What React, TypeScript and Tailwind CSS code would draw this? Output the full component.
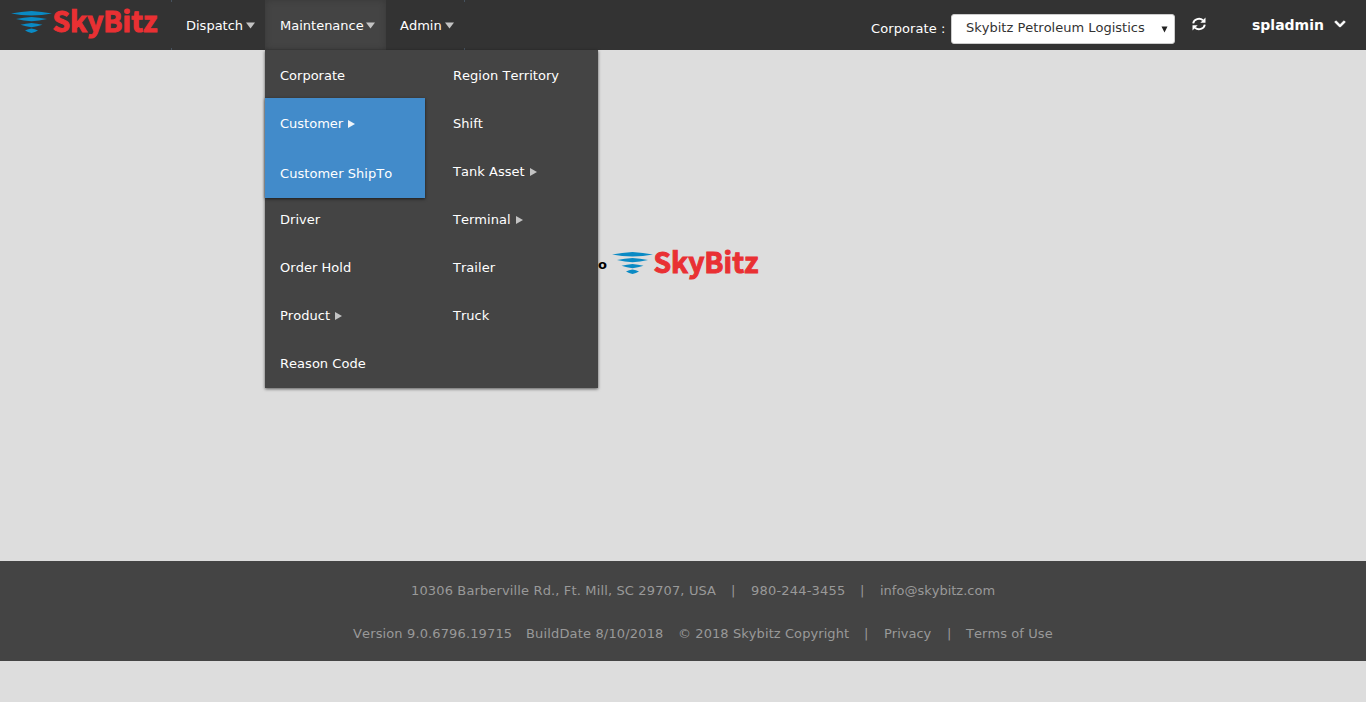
import type { ReactNode } from "react";
import { FaChevronDown } from "react-icons/fa";

function Logo() {
  return (
    <svg width="150" height="36" viewBox="0 0 150 36" className="block shrink-0 overflow-visible">
      <g fill="#0a8ac4">
        <path d="M0 5.500 Q10 3.600 20.500 3 Q31 3.600 41 5.500 Q31 7.300 20.500 7.500 Q10 7.300 0 5.500Z" />
        <path d="M5 11 Q13 9.400 20.500 9 Q28 9.400 36 11 Q28 12.900 20.500 13.300 Q13 12.900 5 11Z" />
        <path d="M9.500 16.800 Q15 15.500 20.500 15 Q26 15.500 31.500 16.800 Q26 18.700 20.500 19.200 Q15 18.700 9.500 16.800Z" />
        <path d="M14 22.500 Q17 20.900 20.500 20.400 Q24 20.900 27 22.500 Q24 24.400 20.500 25 Q17 24.400 14 22.500Z" />
      </g>
      <text
        x="41.500"
        y="24.400"
        textLength="105"
        lengthAdjust="spacingAndGlyphs"
        fill="#e93033"
        stroke="#e93033"
        strokeWidth="1"
        className="font-['Noto_Sans_CJK_SC',sans-serif] text-[28px] font-bold"
      >
        SkyBitz
      </text>
    </svg>
  );
}

function Down() {
  return (
    <svg width="9" height="7" viewBox="0 0 9 7" className="ml-[3px] shrink-0">
      <path d="M0 0.500H9L4.500 6.500Z" fill="#c3c3c3" />
    </svg>
  );
}

function Right({ light = false }: { light?: boolean }) {
  return (
    <svg width="7" height="8" viewBox="0 0 7 8" className="ml-[5px] shrink-0">
      <path d="M0 0L7 4L0 8Z" fill={light ? "#eef4fa" : "#c3c3c3"} />
    </svg>
  );
}

function Item({ children, arrow = false }: { children: ReactNode; arrow?: boolean }) {
  return (
    <li className="flex h-12 items-center pt-[4px]">
      <span className="tracking-[0.03px]">{children}</span>
      {arrow && <Right />}
    </li>
  );
}

function Ticks() {
  return (
    <div className="flex w-px flex-col justify-between">
      <i className="h-[2px] bg-[#46525e]" />
      <i className="h-[2px] bg-[#46525e]" />
    </div>
  );
}

export default function App() {
  return (
    <div className="flex h-[702px] w-[1366px] flex-col overflow-hidden bg-[#ddd] font-['DejaVu_Sans',Verdana,sans-serif] text-[13px] leading-5 whitespace-nowrap text-white [font-kerning:none]">
      <header className="flex h-[50px] shrink-0 bg-[#333]">
        <div className="w-[171px] pt-[8px] pl-[11px]">
          <Logo />
        </div>
        <nav className="flex">
          <Ticks />
          <div className="flex w-[93px] items-center pt-px pl-[14px]">
            <span className="w-[57px]">Dispatch</span>
            <Down />
          </div>
          <div className="relative w-[121px] bg-[#444] shadow-[inset_0_0_7px_rgba(0,0,0,0.18)]">
            <div className="flex h-[50px] items-center pt-px pl-[15px]">
              <span className="w-[83px]">Maintenance</span>
              <Down />
            </div>
            <div className="absolute top-[50px] left-0 z-10 flex h-[338px] w-[333px] bg-[#444] shadow-[0_1px_3px_rgba(0,0,0,0.6)]">
              <ul className="w-[173px]">
                <li className="flex h-12 items-center pt-[4px] pl-[15px]">Corporate</li>
                <li className="h-[96px]">
                  <div className="relative h-[100px] w-40 bg-[#428bca] shadow-[0_1px_3px_rgba(0,0,0,0.6)]">
                    <div className="flex h-[50px] items-center pt-px pl-[15px]">
                      <span>Customer</span>
                      <Right light />
                    </div>
                    <div className="flex h-[50px] items-center pt-px pl-[15px] tracking-[0.05px]">Customer ShipTo</div>
                  </div>
                </li>
                <li className="pl-[15px]">
                  <ul>
                    <Item>Driver</Item>
                    <Item>Order Hold</Item>
                    <Item arrow>Product</Item>
                    <Item>Reason Code</Item>
                  </ul>
                </li>
              </ul>
              <ul className="pl-[15px]">
                <Item>Region Territory</Item>
                <Item>Shift</Item>
                <Item arrow>Tank Asset</Item>
                <Item arrow>Terminal</Item>
                <Item>Trailer</Item>
                <Item>Truck</Item>
              </ul>
            </div>
          </div>
          <div className="flex w-[78px] items-center pt-px pl-[14px]">
            <span className="w-[42px]">Admin</span>
            <Down />
          </div>
          <Ticks />
        </nav>
        <div className="ml-auto flex pr-[20px]">
          <span className="mt-[19px] w-[80px] tracking-[0.1px]">Corporate :</span>
          <div className="mt-[14px] flex h-[30px] w-[224px] items-center justify-between rounded-[3px] border border-[#ccc] bg-white pr-[6px] pb-[2px] pl-[14px] text-[#333]">
            <span>Skybitz Petroleum Logistics</span>
            <svg width="7" height="7" viewBox="0 0 7 7" className="mt-[3px]">
              <path d="M0.500 0.500H6.500L3.500 6.500Z" fill="#222" />
            </svg>
          </div>
          <svg width="14" height="14" viewBox="0 0 14 14" className="mt-[17px] ml-[17px]">
            <path d="M1.200 6.300A5.800 5.300 0 0 1 11 3.300M12.800 7.700A5.800 5.300 0 0 1 3 10.700" fill="none" stroke="white" strokeWidth="1.900" />
            <path d="M13.500 0.500V5.700H8.300ZM0.500 13.500V8.300H5.700Z" fill="white" />
          </svg>
          <span className="mt-[15px] ml-[46px] w-[82px] text-[14px] font-bold">spladmin</span>
          <FaChevronDown className="mt-[18px] h-3 w-3" stroke="white" strokeWidth="35" />
        </div>
      </header>
      <main className="flex h-[511px] shrink-0 pt-[199px] pl-[598px]">
        <span className="mt-[6px] w-[14px] text-[13px] font-bold text-black">o</span>
        <Logo />
      </main>
      <footer className="h-[100px] shrink-0 bg-[#444] text-[#999]">
        <div className="flex pt-[20px] pl-[411px]">
          <span className="w-[320px] tracking-[0.14px]">10306 Barberville Rd., Ft. Mill, SC 29707, USA</span>
          <span className="w-[20px]">|</span>
          <span className="w-[109px] tracking-[0.2px]">980-244-3455</span>
          <span className="w-[20px]">|</span>
          <span>info@skybitz.com</span>
        </div>
        <div className="flex pt-[23px] pl-[353px]">
          <span className="w-[173px] tracking-[0.13px]">Version 9.0.6796.19715</span>
          <span className="w-[152px] tracking-[0.16px]">BuildDate 8/10/2018</span>
          <span className="w-[186px] tracking-[0.08px]">© 2018 Skybitz Copyright</span>
          <span className="w-[20px]">|</span>
          <span className="w-[63px]">Privacy</span>
          <span className="w-[19px]">|</span>
          <span className="tracking-[0.08px]">Terms of Use</span>
        </div>
      </footer>
    </div>
  );
}
